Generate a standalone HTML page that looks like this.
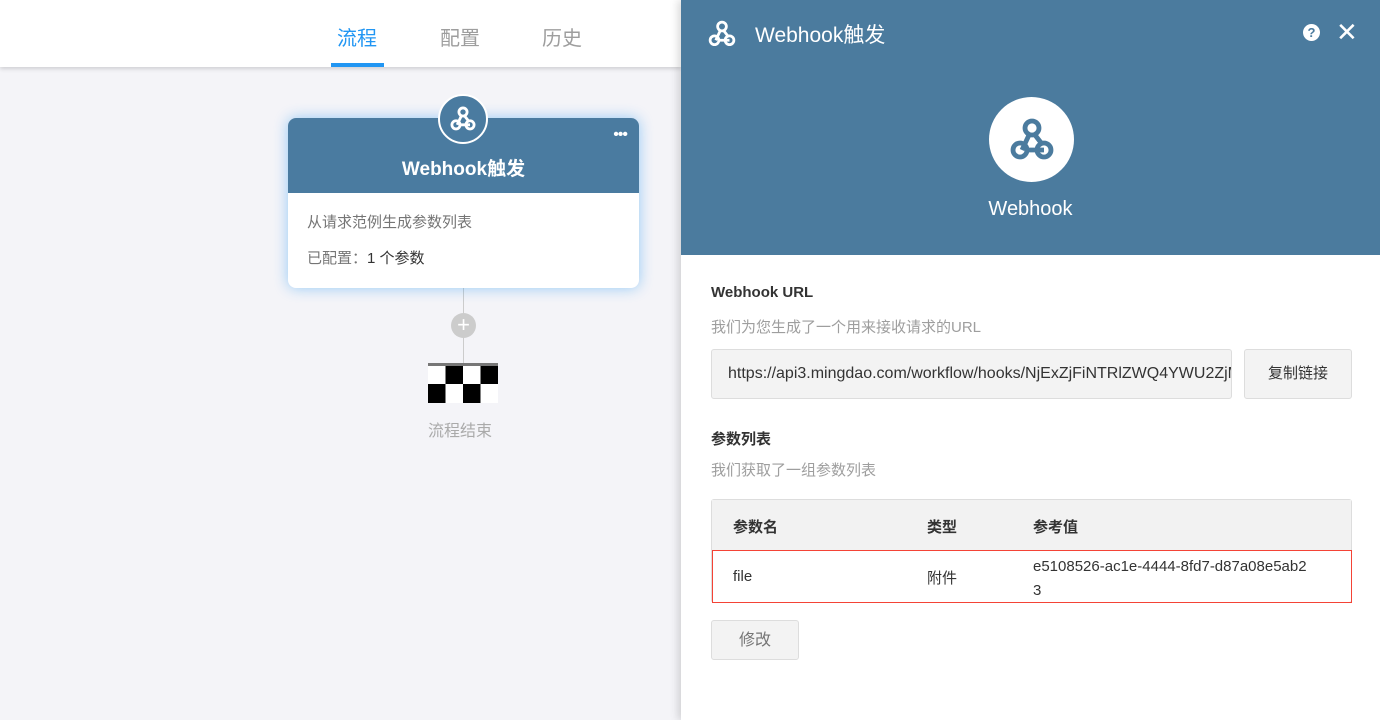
<!DOCTYPE html>
<html><head><meta charset="utf-8"><style>
*{box-sizing:border-box;margin:0;padding:0}
body{width:1380px;height:720px;overflow:hidden;background:#f4f4f8;font-family:"Liberation Sans","Noto Sans CJK SC",sans-serif;position:relative}
.top{position:absolute;left:0;top:0;width:681px;height:67px;background:#fff;box-shadow:0 2px 4px rgba(0,0,0,.15)}
.tab{position:absolute;top:22px;font-size:20px;color:#9e9e9e}
.ul{position:absolute;left:331px;top:63px;width:53px;height:4px;background:#2196f3}
.card{position:absolute;left:288px;top:118px;width:351px;height:170px;background:#fff;border-radius:8px;box-shadow:0 0 14px rgba(33,150,243,.45);overflow:hidden}
.ch{height:75px;background:#4a7ba0;color:#fff;font-weight:bold;font-size:19px;text-align:center;padding-top:36px}
.cb{padding:18px 19px;font-size:15px;color:#757575}
.ic{position:absolute;left:438px;top:94px;width:50px;height:50px;border-radius:50%;background:#4a7ba0;border:2px solid #fff;display:flex;align-items:center;justify-content:center}
.panel{position:absolute;left:681px;top:0;width:699px;height:720px;background:#fff;box-shadow:-3px 0 8px rgba(0,0,0,.15)}
.ph{height:255px;background:#4b7b9e;color:#fff;position:relative}
.t{font-size:15px;font-weight:bold;color:#333;position:absolute;left:30px}
.s{font-size:15px;color:#9e9e9e;position:absolute;left:30px}
</style></head><body>
<div class="top">
<span class="tab" style="left:337px;color:#2196f3">流程</span>
<span class="tab" style="left:440px">配置</span>
<span class="tab" style="left:542px">历史</span>
<div class="ul"></div>
</div>
<div style="position:absolute;left:463px;top:288px;width:1px;height:75px;background:#ccc"></div>
<div style="position:absolute;left:451px;top:313px;width:25px;height:25px;border-radius:50%;background:#ccc;color:#fff;font-size:22px;line-height:24px;text-align:center">+</div>
<div style="position:absolute;left:428px;top:363px;width:70px;height:40px;background:#fff;border-top:3px solid #777">
<svg width="70" height="37" style="display:block"><rect x="17.5" y="0" width="17.5" height="18" fill="#000"/><rect x="52.5" y="0" width="17.5" height="18" fill="#000"/><rect x="0" y="18" width="17.5" height="19" fill="#000"/><rect x="35" y="18" width="17.5" height="19" fill="#000"/></svg></div>
<div style="position:absolute;left:428px;top:417px;font-size:16px;color:#aaa">流程结束</div>
<div class="card"><div class="ch">Webhook触发</div>
<div style="position:absolute;right:12px;top:8px;color:#fff;font-size:16px;letter-spacing:-1px">•••</div>
<div class="cb"><div>从请求范例生成参数列表</div><div style="margin-top:15px">已配置：<span style="color:#333">1 个参数</span></div></div></div>
<div class="ic"><svg width="28" height="28" viewBox="0 0 24 24" fill="none" stroke="#fff" stroke-width="2.4"><circle cx="12" cy="6" r="3.5"/><circle cx="6" cy="17" r="3.5"/><circle cx="18" cy="17" r="3.5"/><path d="M10.5 9.5L7 17M9.5 17H18M13.5 9.5L17 14"/></svg></div>
<div class="panel">
<div class="ph">
<svg style="position:absolute;left:26px;top:19px" width="30" height="30" viewBox="0 0 24 24" fill="none" stroke="#fff" stroke-width="2.2"><circle cx="12" cy="6" r="3.5"/><circle cx="6" cy="17" r="3.5"/><circle cx="18" cy="17" r="3.5"/><path d="M10.5 9.5L7 17M9.5 17H18M13.5 9.5L17 14"/></svg>
<div style="position:absolute;left:74px;top:19px;font-size:21px">Webhook触发</div>
<div style="position:absolute;left:622px;top:24px;width:17px;height:17px;border-radius:50%;background:#fff;color:#4b7b9e;font-size:13px;font-weight:bold;text-align:center;line-height:17px">?</div>
<div style="position:absolute;left:655px;top:17px;font-size:26px">✕</div>
<div style="position:absolute;left:308px;top:97px;width:85px;height:85px;border-radius:50%;background:#fff;display:flex;align-items:center;justify-content:center"><svg width="48" height="48" viewBox="0 0 24 24" fill="none" stroke="#4b7b9e" stroke-width="2.4"><circle cx="12" cy="6" r="3.5"/><circle cx="6" cy="17" r="3.5"/><circle cx="18" cy="17" r="3.5"/><path d="M10.5 9.5L7 17M9.5 17H18M13.5 9.5L17 14"/></svg></div>
<div style="position:absolute;left:0;width:699px;text-align:center;top:198px;font-size:20px">Webhook</div>
</div>
<div class="t" style="top:284px">Webhook URL</div>
<div class="s" style="top:316px">我们为您生成了一个用来接收请求的URL</div>
<div style="position:absolute;left:30px;top:349px;width:521px;height:50px;background:#f3f3f3;border:1px solid #ddd;border-radius:3px;font-size:16px;color:#333;padding:15px 16px;white-space:nowrap;overflow:hidden">https://api3.mingdao.com/workflow/hooks/NjExZjFiNTRlZWQ4YWU2ZjM</div>
<div style="position:absolute;left:563px;top:349px;width:108px;height:50px;background:#f3f3f3;border:1px solid #ddd;border-radius:3px;font-size:15px;color:#333;text-align:center;line-height:48px">复制链接</div>
<div class="t" style="top:428px">参数列表</div>
<div class="s" style="top:459px">我们获取了一组参数列表</div>
<div style="position:absolute;left:30px;top:499px;width:641px;height:104px;border:1px solid #ddd;border-radius:3px;font-size:15px;color:#333">
<div style="height:51px;background:#f2f2f2;font-weight:bold;position:relative">
<span style="position:absolute;left:21px;top:16px">参数名</span><span style="position:absolute;left:215px;top:16px">类型</span><span style="position:absolute;left:321px;top:16px">参考值</span></div>
</div>
<div style="position:absolute;left:31px;top:550px;width:640px;height:53px;border:1px solid #f44336;font-size:15px;color:#333">
<span style="position:absolute;left:20px;top:17px">file</span><span style="position:absolute;left:214px;top:16px">附件</span><span style="position:absolute;left:320px;top:4px;line-height:24px">e5108526-ac1e-4444-8fd7-d87a08e5ab2<br>3</span></div>
<div style="position:absolute;left:30px;top:620px;width:88px;height:40px;background:#f3f3f3;border:1px solid #ddd;border-radius:3px;font-size:16px;color:#757575;text-align:center;line-height:40px">修改</div>
</div>
</body></html>
